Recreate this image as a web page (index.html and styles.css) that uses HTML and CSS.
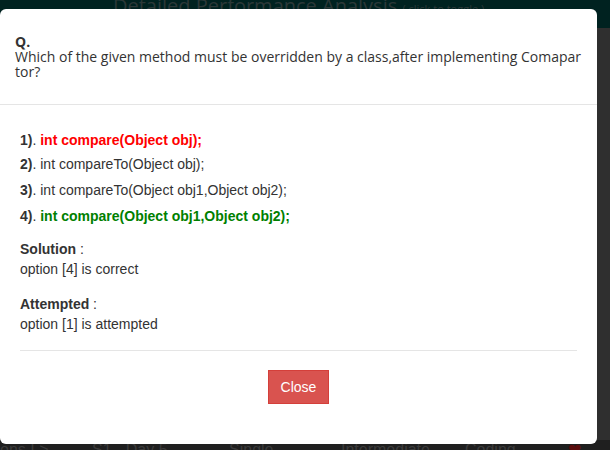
FILE: index.html
```html
<!DOCTYPE html>
<html>
<head>
<meta charset="utf-8">
<link rel="stylesheet" href="styles.css">
</head>
<body>
<div class="page">
  <header class="topbar">
    <h2 class="title">Detailed Performance Analysis <small class="toggle">( click to toggle )</small></h2>
  </header>
  <main class="content"></main>
  <div class="row">
    <span class="c1">ons I &gt;</span>
    <span class="c2">S1 - Day 5</span>
    <span class="c3">Single</span>
    <span class="c4">Intermediate</span>
    <span class="c5">Coding</span>
    <span class="c6">&#10084;</span>
  </div>
</div>

<div class="modal">
  <div class="modal-header">
    <div class="q-label">Q.</div>
    <div class="q-text">Which of the given method must be overridden by a class,after implementing Comapartor?</div>
  </div>
  <div class="modal-body">
    <div class="options">
      <div class="opt first"><b>1)</b>. <span class="wrong">int compare(Object obj);</span></div>
      <div class="opt"><b>2)</b>. int compareTo(Object obj);</div>
      <div class="opt"><b>3)</b>. int compareTo(Object obj1,Object obj2);</div>
      <div class="opt"><b>4)</b>. <span class="right">int compare(Object obj1,Object obj2);</span></div>
    </div>
    <div class="info">
      <div><b>Solution</b> :</div>
      <div>option [4] is correct</div>
    </div>
    <div class="info">
      <div><b>Attempted</b> :</div>
      <div>option [1] is attempted</div>
    </div>
    <hr class="sep">
    <div class="footer">
      <button class="btn-close">Close</button>
    </div>
  </div>
</div>
</body>
</html>
```

FILE: styles.css
```css
html, body {
  margin: 0;
  padding: 0;
}
body {
  background: #2f2f2f;
  width: 610px;
  height: 450px;
  overflow: hidden;
  font-family: "Liberation Sans", Arial, sans-serif;
}
.page {
  height: 450px;
  display: flex;
  flex-direction: column;
  overflow: hidden;
}
.topbar {
  height: 28px;
  flex: 0 0 28px;
  background: #002220;
  overflow: hidden;
}
.title {
  margin: -4px 0 0 0;
  padding-left: 113px;
  font-family: "Open Sans", sans-serif;
  font-weight: 400;
  font-size: 20px;
  line-height: 20px;
  color: #2b3838;
  white-space: nowrap;
}
.toggle {
  font-size: 11px;
  color: #2b3838;
}
.content {
  flex: 0 0 412px;
}
.row {
  flex: 0 0 10px;
  background: #1f1f1f;
  display: flex;
  font-size: 16px;
  line-height: 20px;
  color: #3a3a3a;
  white-space: nowrap;
  padding-top: 0;
}
.row span { display: block; }
.c1 { width: 92px; }
.c2 { width: 137px; }
.c3 { width: 112px; }
.c4 { width: 124px; }
.c5 { width: 103px; }
.c6 { color: #5a0c0c; }

.modal {
  position: absolute;
  left: 0;
  top: 9px;
  width: 597px;
  height: 435px;
  background: #fff;
  border-radius: 6px;
  display: flex;
  flex-direction: column;
  color: #333;
}
.modal-header {
  padding: 25px 15px 25px;
  border-bottom: 1px solid #e5e5e5;
  font-family: "Open Sans", sans-serif;
  font-size: 14px;
  line-height: 15px;
  color: #333;
}
.q-label {
  font-weight: 700;
}
.q-text {
  word-break: break-all;
}
.modal-body {
  padding: 25px 20px 0;
  font-size: 14px;
  line-height: 20px;
}
.opt {
  height: 26px;
}
.opt.first {
  height: 23.5px;
}
.wrong {
  color: #ff0000;
  font-weight: 700;
}
.right {
  color: #008000;
  font-weight: 700;
}
.info {
  margin-top: 7.5px;
}
.info + .info {
  margin-top: 15px;
}
.sep {
  border: 0;
  border-top: 1px solid #e5e5e5;
  margin: 15.5px 0 0;
  height: 0;
}
.footer {
  display: flex;
  justify-content: center;
  padding-top: 19px;
}
.btn-close {
  font-family: "Liberation Sans", Arial, sans-serif;
  font-size: 14px;
  line-height: 20px;
  padding: 6px 12px;
  color: #fff;
  background: #d9534f;
  border: 1px solid #d43f3a;
  border-radius: 0;
  margin: 0;
}
```
